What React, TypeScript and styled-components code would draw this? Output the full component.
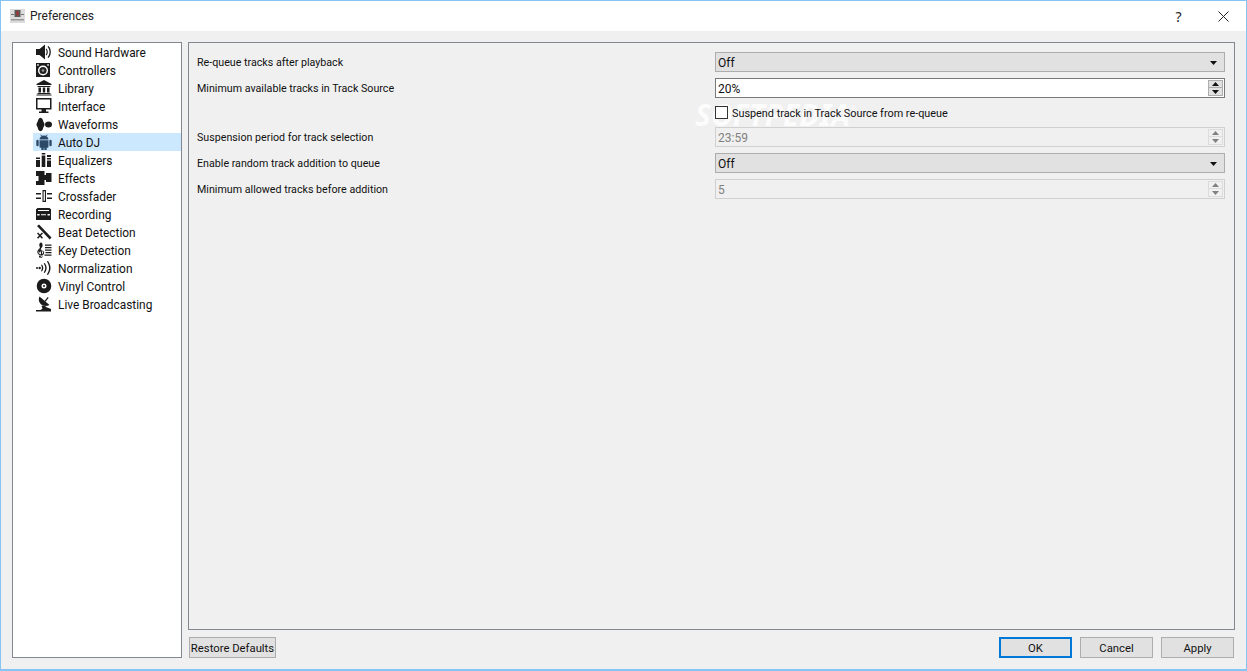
import React from "react";
import styled, { createGlobalStyle } from "styled-components";

const Global = createGlobalStyle`
  html, body { margin: 0; padding: 0; height: 100%; overflow: hidden; }
  #root { height: 100%; }
  * { box-sizing: border-box; }
`;

const Win = styled.div`
  width: 1247px; height: 671px;
  display: flex; flex-direction: column;
  border: 1px solid #86c4f4; border-bottom-width: 2px;
  background: #f0f0f0;
  font-family: Roboto, "Noto Sans", sans-serif;
  font-size: 12px; color: #111;
`;
const TitleBar = styled.div`
  height: 30px; flex: none; background: #fff;
  display: flex; align-items: center; padding-left: 9px;
`;
const TitleText = styled.span`
  margin-left: 4px; font-size: 12px; color: #222; flex: 1;
`;
const TitleBtn = styled.button`
  width: 45px; height: 30px; border: 0; background: transparent; padding: 0;
  display: flex; align-items: center; justify-content: center;
  font: 14px "Noto Sans", sans-serif; color: #222;
`;
const Body = styled.div`
  flex: 1; min-height: 0;
  display: grid; grid-template-columns: 170px 1047px;
  grid-template-rows: 588px 21px;
  column-gap: 6px; row-gap: 7px;
  padding: 11px 0 0 11px;
`;
const Tree = styled.ul`
  grid-row: 1 / 3; margin: 0; padding: 0 0 0 20px; list-style: none;
  background: #fff; border: 1px solid #828790;
`;
const TreeItem = styled.li<{ $sel?: boolean }>`
  height: 18px; display: flex; align-items: center; gap: 6px; padding-left: 3px;
  background: ${p => (p.$sel ? "#cce8ff" : "transparent")};
  color: #111; white-space: nowrap;
`;
const TreeText = styled.span`
  padding-top: 2px; font-size: 11.9px;
`;
const Icon = styled.svg<{ $c?: string }>`
  width: 16px; height: 16px; flex: none; fill: ${p => p.$c || "#1c1c1c"}; stroke: none;
`;
const Panel = styled.div`
  border: 1px solid #828790;
  padding: 9px 9px 0 8px;
  display: grid; grid-template-columns: 1fr 510px; row-gap: 6px;
  align-content: start;
  font-size: 11px;
`;
const Label = styled.div`
  height: 20px; display: flex; align-items: center; color: #111; white-space: nowrap;
  font-size: 10.7px;
`;
const Combo = styled.div`
  height: 20px; background: #e1e1e1; border: 1px solid #adadad;
  display: flex; align-items: center; justify-content: space-between;
  padding: 1px 7px 0 2px; color: #111; font-size: 12px;
`;
const Caret = styled.svg`
  width: 7px; height: 4px; fill: #111;
`;
const Spin = styled.div<{ $off?: boolean }>`
  height: 20px; background: ${p => (p.$off ? "#f0f0f0" : "#fff")};
  border: 1px solid ${p => (p.$off ? "#d0d0d0" : "#7a7a7a")};
  color: ${p => (p.$off ? "#808080" : "#111")};
  display: flex; align-items: center; justify-content: space-between;
  padding: 0 1px 0 2px; font-size: 12px;
`;
const SpinValue = styled.span`
  padding-top: 1px;
`;
const SpinBtns = styled.div`
  width: 15px; height: 16px; display: grid; grid-template-rows: 8px 8px;
`;
const SpinBtn = styled.div<{ $off?: boolean; $down?: boolean }>`
  background: ${p => (p.$off ? "#f0f0f0" : "#e1e1e1")};
  border: 1px solid ${p => (p.$off ? "#dcdcdc" : "#adadad")};
  ${p => (p.$down ? "border-top-width: 0;" : "")}
  display: flex; align-items: center; justify-content: center;
  svg { width: 7px; height: 4px; fill: ${p => (p.$off ? "#808080" : "#111")}; }
`;
const CheckRow = styled.div`
  position: relative; height: 17px; display: flex; align-items: center; gap: 4px; color: #111;
`;
const Box = styled.span`
  position: relative; width: 13px; height: 13px; background: #fff; border: 1px solid #333; flex: none;
`;
const Watermark = styled.span`
  position: absolute; left: -20px; top: -1px; color: #fff; opacity: .8;
  font: italic 700 30px/23px "Noto Sans", sans-serif; pointer-events: none; white-space: nowrap;
  sup { font-size: 8px; font-style: normal; font-weight: 400; vertical-align: 14px; line-height: 0; }
`;
const CheckText = styled.span`
  position: relative; padding-top: 1px; font-size: 10.85px;
`;
const Spacer = styled.div`height: 17px;`;
const Footer = styled.div`
  display: flex; align-items: stretch; justify-content: space-between; padding-left: 1px; padding-right: 1px;
`;
const FooterRight = styled.div`display: flex; gap: 8px;`;
const Btn = styled.button<{ $primary?: boolean; $wide?: boolean }>`
  height: 21px; width: ${p => (p.$wide ? "87px" : "73px")};
  background: #e1e1e1; padding: 1px 0 0;
  border: ${p => (p.$primary ? "2px solid #0078d7" : "1px solid #adadad")};
  font: 11.3px Roboto, sans-serif; color: #111;
`;

const Up = () => <svg viewBox="0 0 7 4"><path d="M3.5 0 7 4H0z" /></svg>;
const Down = () => <svg viewBox="0 0 7 4"><path d="M0 0h7L3.5 4z" /></svg>;
const Arrows = ({ off }: { off?: boolean }) => (
  <SpinBtns>
    <SpinBtn $off={off}><Up /></SpinBtn>
    <SpinBtn $off={off} $down><Down /></SpinBtn>
  </SpinBtns>
);

const icons: Record<string, React.ReactNode> = {
  sound: <><path d="M0 5h3.500L9 .5v15L3.500 11H0z" /><path d="M10.500 4.500c1.800 2 1.800 5 0 7l-.8-.8c1.300-1.700 1.300-3.700 0-5.400zM12.500 2c3.200 3.300 3.200 8.700 0 12l-1-.8c2.700-2.900 2.700-7.500 0-10.400z" /></>,
  ctrl: <><path d="M0 1h14v14H0z" /><circle cx="7" cy="8.500" r="5" fill="#fff" /><circle cx="7" cy="8.500" r="3.600" fill="#222" /><circle cx="7" cy="8.500" r="1.300" fill="#999" /><rect x="1.200" y="2.200" width="1.500" height="1.500" fill="#fff" /><rect x="11.300" y="2.200" width="1.500" height="1.500" fill="#fff" /></>,
  lib: <path d="M8 0l7.500 4v1H.5V4zM1.500 6h13v1h-13zM2.500 7.500h2.500v5H2.500zM6.800 7.500h2.400v5H6.800zM11 7.500h2.500v5H11zM1.500 13h13v1h-13zM.5 14.500h15v1H.5z" />,
  mon: <path fillRule="evenodd" d="M0 0h15.500v11.500H10v2h2.500V15H3v-1.500h2.500v-2H0zM1.500 1.500v8.500h12.500V1.500z" />,
  wave: <><ellipse cx="4.500" cy="8.500" rx="3.200" ry="6.800" /><ellipse cx="4.500" cy="8.500" rx="4" ry="3" /><ellipse cx="12.500" cy="8.500" rx="3.500" ry="3" /></>,
  android: <path d="M3.500 5.500C3.500 3.200 5.300 1.500 8 1.500s4.500 1.700 4.500 4zM4.800.5l1.400 1.600-.5.4L4.300.9zM11.200.5 9.800 2.100l.5.4L11.700.9zM3.500 6.300h9v6.500c0 .6-.4 1-1 1h-.8V15.500a1.200 1.200 0 0 1-2.400 0v-1.700H7.700v1.700a1.200 1.200 0 0 1-2.400 0v-1.700h-.8c-.6 0-1-.4-1-1zM.3 7a1.200 1.200 0 0 1 2.400 0v4a1.200 1.200 0 0 1-2.400 0zM13.300 7a1.200 1.200 0 0 1 2.400 0v4a1.200 1.200 0 0 1-2.400 0z" />,
  eq: <path d="M0 8h4v7H0zM0 5.500h4V7H0zM5.700 1h3.600v1.500H5.700zM5.700 3.500h3.600V15H5.700zM11 3h4v2h-4zM11 6h4v1.500h-4zM11 8.500h4V15h-4z" />,
  fx: <path d="M0 1h8.500v4H10V3h5.500v9H10v-2H8.500v5H0v-4h2.500V6H0z" />,
  xf: <path fillRule="evenodd" d="M0 5h5v1.500H0zM0 9.500h5V11H0zM11 5h5v1.500h-5zM11 9.500h5V11h-5zM6.500 2h3.500v12H6.500zM7.600 3.200v9.600h1.300V3.200z" />,
  rec: <path fillRule="evenodd" d="M1.500 2h12l1 1h.5v11H0V3h.5zM2 4v1h11V4zM1.200 8v1.600h2.400V8zM11.500 8v1.600h2.400V8zM5 8.300v1h5v-1z" />,
  beat: <path d="M1 2 3 .5 15.500 13.500l-1.800 2zM1 9.500l1.100-1 1.900 2 1.900-2 1.100 1-2 2.100 2 2.100-1.100 1-1.900-2-1.900 2-1.100-1 2-2.100z" />,
  key: <path d="M5 .5c1 0 1.600 1.200 1.600 2.700S5.800 5.500 5 6.400l.4 2c1.700-.2 2.800 1 2.800 2.400 0 1.200-.8 2.200-2 2.500l.3 1.200c0 1-.7 1.800-1.700 1.800S3 15.200 3 14.500c0-.6.400-1 1-1s.9.400.9.900-.4.800-.8.800c.2.200.4.300.7.300.6 0 1-.5 1-1.100l-.3-1.100H5c-2.100 0-3.700-1.300-3.700-3.200 0-1.500 1-2.800 2.600-4.200l-.3-1.700C3.300 4 3.300 3.500 3.300 3 3.300 1.500 4 .5 5 .5zM4.400 7.300c-1 .9-1.900 1.700-1.900 3 0 1 .9 1.900 2.200 1.900h.4l-.5-3c-.6.200-.9.700-.9 1.200l.3.700c-.8-.3-1.200-.9-1.200-1.500 0-.8.600-1.500 1.700-1.800zM5.800 9.300l.5 2.800c.5-.2.900-.8.900-1.400 0-.8-.6-1.400-1.400-1.400zM9 2.500h6.500v1.200H9zM9 5h6.500v1.200H9zM9 7.500h6.500v1.200H9zM9.500 10h6v1.200h-6zM8.500 12.500h7v1.200h-7z" />,
  norm: <><circle cx="1" cy="8" r="1" /><circle cx="3.700" cy="8" r="1.200" /><path d="M6 4.500c1.800 2.300 1.800 4.700 0 7l-1-.6c1.300-1.900 1.300-3.900 0-5.800zM8.800 3c2.500 3.200 2.500 6.800 0 10l-1.100-.6c2.100-2.900 2.100-5.900 0-8.800zM12 1c3.400 4.500 3.400 9.500 0 14l-1.200-.6c3-4.100 3-8.700 0-12.800z" /></>,
  vinyl: <path fillRule="evenodd" d="M8 .7a7.300 7.300 0 1 1 0 14.600A7.300 7.300 0 0 1 8 .7zM8 5.500a2.500 2.500 0 1 0 0 5 2.500 2.500 0 0 0 0-5zM8 7a1 1 0 1 1 0 2 1 1 0 0 1 0-2z" />,
  live: <path d="M3.500 .5C2 3.500 3 7 6 9c2.500 1.500 5 1.300 7.500 0zM8.500 5l3.200-4 1 .7-3.200 4zM5.500 10l2.500-.8 2.500 2L15 13v2.500H0V14h4.500l2-1.500z" />,
};

const items: [string, string][] = [
  ["Sound Hardware", "sound"], ["Controllers", "ctrl"], ["Library", "lib"], ["Interface", "mon"],
  ["Waveforms", "wave"], ["Auto DJ", "android"], ["Equalizers", "eq"], ["Effects", "fx"],
  ["Crossfader", "xf"], ["Recording", "rec"], ["Beat Detection", "beat"], ["Key Detection", "key"],
  ["Normalization", "norm"], ["Vinyl Control", "vinyl"], ["Live Broadcasting", "live"],
];

const Logo = () => (
  <svg width="16" height="16" viewBox="0 0 16 16">
    <rect x="0" y="1" width="15" height="14" fill="#dcdcdc" />
    <rect x="4.500" y="2" width="6" height="7" fill="#5a5a5a" />
    <rect x="6.500" y="3" width="2" height="4.500" fill="#a83232" />
    <rect x="1" y="6" width="3" height="1" fill="#777" />
    <rect x="11" y="6" width="3" height="1" fill="#777" />
    <rect x="1" y="11" width="13" height="1.500" fill="#9a9a9a" />
  </svg>
);

export default function App() {
  return (
    <Win>
      <Global />
      <TitleBar>
        <Logo />
        <TitleText>Preferences</TitleText>
        <TitleBtn>?</TitleBtn>
        <TitleBtn>
          <svg width="11" height="11" viewBox="0 0 11 11" stroke="#222" fill="none"><path d="M.5.500l10 10M10.500.500l-10 10" /></svg>
        </TitleBtn>
      </TitleBar>
      <Body>
        <Tree>
          {items.map(([t, k]) => (
            <TreeItem key={t} $sel={t === "Auto DJ"}>
              <Icon viewBox="0 0 16 16" $c={k === "android" ? "#2c4a68" : undefined}>{icons[k]}</Icon>
              <TreeText>{t}</TreeText>
            </TreeItem>
          ))}
        </Tree>
        <Panel>
          <Label>Re-queue tracks after playback</Label>
          <Combo>Off<Caret viewBox="0 0 7 4"><path d="M0 0h7L3.5 4z" /></Caret></Combo>
          <Label>Minimum available tracks in Track Source</Label>
          <Spin><SpinValue>20%</SpinValue><Arrows /></Spin>
          <Spacer />
          <CheckRow>
            <Watermark>SOFTPEDIA<sup>®</sup></Watermark>
            <Box /><CheckText>Suspend track in Track Source from re-queue</CheckText>
          </CheckRow>
          <Label>Suspension period for track selection</Label>
          <Spin $off><SpinValue>23:59</SpinValue><Arrows off /></Spin>
          <Label>Enable random track addition to queue</Label>
          <Combo>Off<Caret viewBox="0 0 7 4"><path d="M0 0h7L3.5 4z" /></Caret></Combo>
          <Label>Minimum allowed tracks before addition</Label>
          <Spin $off><SpinValue>5</SpinValue><Arrows off /></Spin>
        </Panel>
        <Footer>
          <Btn $wide>Restore Defaults</Btn>
          <FooterRight>
            <Btn $primary>OK</Btn>
            <Btn>Cancel</Btn>
            <Btn>Apply</Btn>
          </FooterRight>
        </Footer>
      </Body>
    </Win>
  );
}
